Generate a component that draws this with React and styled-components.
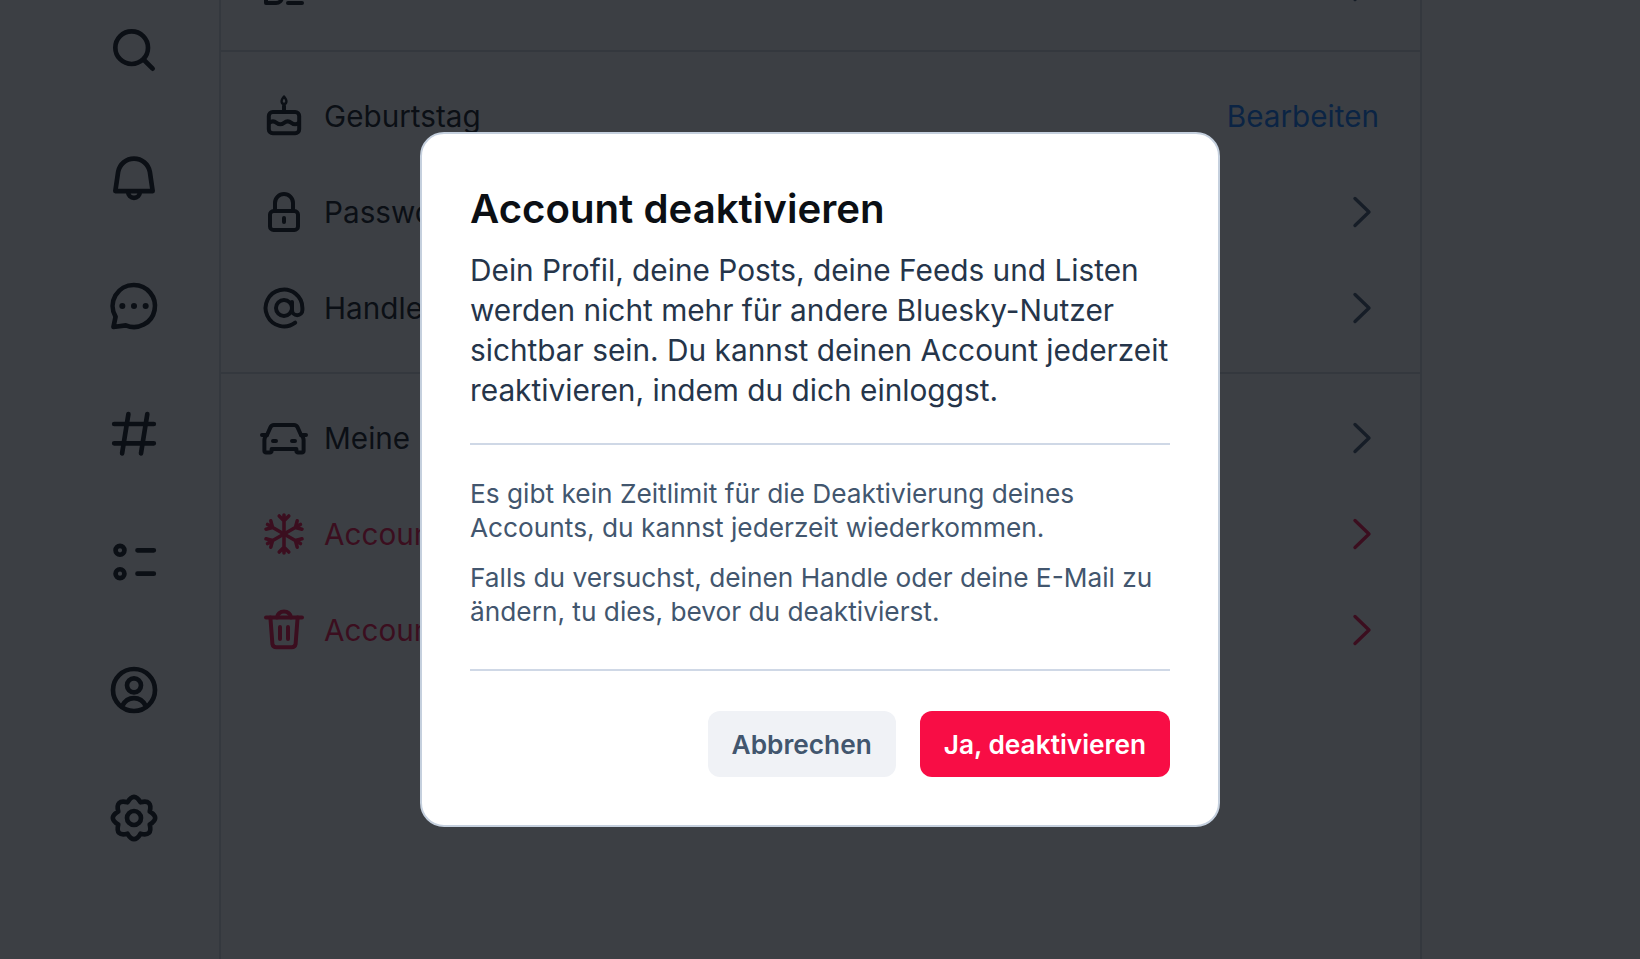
import styled, { createGlobalStyle } from "styled-components";

const GlobalStyle = createGlobalStyle`
  html, body {
    margin: 0;
    height: 100%;
    background: #fff;
    overflow: hidden;
    font-family: Inter, "Noto Sans", sans-serif;
    color: #0b0f14;
  }
`;

const Page = styled.div`
  display: grid;
  grid-template-columns: 219px 1203px 1fr;
  height: 959px;
  overflow: hidden;
`;

const Nav = styled.nav`
  display: flex;
  flex-direction: column;
  align-items: center;
  gap: 72px;
  padding: 22px 0 0 49px;
`;

const Main = styled.main`
  border-left: 2px solid #d4dbe2;
  border-right: 2px solid #d4dbe2;
`;

const Group = styled.section`
  display: flex;
  flex-direction: column;
  padding: 16px 0;
  border-bottom: ${(p) => (p.$last ? "none" : "2px solid #d4dbe2")};
  margin-top: ${(p) => (p.$scrolled ? "-78px" : "0")};
`;

const Row = styled.div`
  display: flex;
  align-items: center;
  gap: 16px;
  height: 96px;
  padding: 0 41px 0 39px;
  color: ${(p) => (p.$danger ? "#f80d45" : "#0b0f14")};
`;

const Label = styled.span`
  flex: 1;
  font-size: 29.7px;
  white-space: nowrap;
`;

const EditLink = styled.span`
  font-size: 29.7px;
  color: #0a7aff;
`;

const Chevron = styled.svg`
  width: 32px;
  height: 32px;
  fill: none;
  stroke: ${(p) => (p.$danger ? "#f80d45" : "#42566e")};
  stroke-width: 3.4;
  stroke-linecap: round;
  stroke-linejoin: round;
`;

const Icon = styled.svg`
  flex: none;
  width: ${(p) => p.$size}px;
  height: ${(p) => p.$size}px;
  fill: none;
  stroke: currentColor;
  stroke-width: 2;
  stroke-linecap: round;
  stroke-linejoin: round;
`;

const Overlay = styled.div`
  position: fixed;
  inset: 0;
  display: flex;
  align-items: center;
  justify-content: center;
  background: rgba(11, 15, 21, 0.8);
`;

const Dialog = styled.div`
  width: 700px;
  padding: 48px;
  background: #fff;
  border: 2px solid #c5d0de;
  border-radius: 24px;
`;

const Title = styled.h2`
  margin: 0 0 15px;
  font-size: 40.2px;
  line-height: 53px;
  font-weight: 600;
  color: #0b0f14;
`;

const Lead = styled.p`
  margin: 0;
  padding-bottom: 1px;
  font-size: 29.8px;
  line-height: 40px;
  color: #25354a;
`;

const Divider = styled.hr`
  height: 2px;
  margin: 32px 0;
  border: 0;
  background: #cfd8e6;
`;

const Notes = styled.div`
  display: flex;
  flex-direction: column;
  gap: 16px;
  padding-bottom: 8px;
`;

const Note = styled.p`
  margin: 0;
  font-size: 26.25px;
  line-height: 34px;
  color: #42566e;
`;

const Actions = styled.div`
  display: flex;
  justify-content: flex-end;
  gap: 24px;
  margin-top: 40px;
`;

const Button = styled.button`
  height: 66px;
  padding: 0 24px;
  border: 0;
  border-radius: 12px;
  font-family: inherit;
  font-size: 26.25px;
  font-weight: 600;
  background: ${(p) => (p.$primary ? "#f80d45" : "#f0f2f6")};
  color: ${(p) => (p.$primary ? "#fff" : "#42566e")};
`;

const Dot = styled.circle`
  fill: currentColor;
  stroke: none;
`;

const cogPath = () => {
  const pt = (deg, r) => {
    const a = (deg * Math.PI) / 180;
    return `${(12 + r * Math.cos(a)).toFixed(2)} ${(12 + r * Math.sin(a)).toFixed(2)}`;
  };
  let d = `M${pt(-112.5, 7.3)}`;
  for (let i = 0; i < 8; i++) {
    const tip = -90 + i * 45;
    d += ` Q${pt(tip, 11.4)} ${pt(tip + 22.5, 7.3)}`;
  }
  return d + "Z";
};

const navIcons = [
  <>
    <circle cx="11" cy="11" r="7" />
    <path d="M16.5 16.5 20 20" />
  </>,
  <>
    <path d="M4 17.6 5.2 9.4a6.9 6.9 0 0 1 13.6 0L20 17.6Z" />
    <path d="M9.5 18a2.5 2.5 0 0 0 5 0" />
  </>,
  <>
    <path d="M12 3a9 9 0 1 1-3.5 17.3L3.2 21l.9-4.4A9 9 0 0 1 12 3Z" />
    <Dot cx="7" cy="12" r="1.3" />
    <Dot cx="12" cy="12" r="1.3" />
    <Dot cx="17" cy="12" r="1.3" />
  </>,
  <path d="M9.6 3.5 6.9 20.3M17.7 3.5 15 20.3M3.5 7.7h17M3.5 16h17" />,
  <>
    <circle cx="6" cy="7" r="1.9" />
    <circle cx="6" cy="17" r="1.9" />
    <path d="M13.5 7h7M13.5 17h7" />
  </>,
  <>
    <circle cx="12" cy="12" r="9" />
    <circle cx="12" cy="10" r="3" />
    <path d="M6.8 19C8 16.7 9.8 15.5 12 15.5s4 1.2 5.2 3.5" />
  </>,
  <>
    <path d={cogPath()} />
    <circle cx="12" cy="12" r="3" />
  </>,
];

const ListIcon = (
  <>
    <path d="M3 13h5a3 3 0 0 1 3 3v1.5a3 3 0 0 1-3 3H3Z" />
    <path d="M14 20.5h7" />
  </>
);

const CakeIcon = (
  <>
    <rect x="4.4" y="10" width="15.2" height="10.6" rx="2" />
    <path d="M4.6 15.4q1.85-1.4 3.7 0t3.7 0 3.7 0 3.7 0" />
    <path d="M12 7v3" />
    <path d="M12 2.2c.8 1 1.3 1.7 1.2 2.5a1.2 1.2 0 0 1-2.4 0c-.1-.8.4-1.5 1.2-2.5Z" strokeWidth="1.2" />
  </>
);

const LockIcon = (
  <>
    <rect x="5" y="11.5" width="14" height="9.5" rx="1.8" />
    <path d="M7.5 11.5V7.5a4.5 4.5 0 0 1 9 0v4" />
    <path d="M12 15v2" />
  </>
);

const AtIcon = (
  <>
    <circle cx="12" cy="12" r="4" />
    <path d="M16 9v4a2.6 2.6 0 0 0 5.2 0v-1a9.2 9.2 0 1 0-3.6 7.3" />
  </>
);

const CarIcon = (
  <>
    <path d="M7 5.5h10a2 2 0 0 1 1.8 1.2l1.7 3.8q1.3 1 1.3 2.5v5.5a.8.8 0 0 1-.8.8h-2a.8.8 0 0 1-.8-.8v-1H5.8v1a.8.8 0 0 1-.8.8H3a.8.8 0 0 1-.8-.8V13q0-1.5 1.3-2.5l1.7-3.8A2 2 0 0 1 7 5.5Z" />
    <path d="M1 10.5h2.5M20.5 10.5H23M6.5 13.5h1.5M16 13.5h1.5" />
  </>
);

const SnowflakeIcon = (
  <>
    {[0, 60, 120].map((deg) => (
      <path
        key={deg}
        transform={`rotate(${deg} 12 12)`}
        d="M12 2.5v19M9.6 3 12 5.4 14.4 3M9.6 21 12 18.6 14.4 21"
        strokeWidth="1.8"
      />
    ))}
  </>
);

const TrashIcon = (
  <>
    <path d="M3 5.8h18" />
    <path d="M8.5 5.8a3.5 3 0 0 1 7 0" />
    <path d="M5.2 5.8l1 13.2a2 2 0 0 0 2 1.6h7.6a2 2 0 0 0 2-1.6l1-13.2" />
    <path d="M10 10.5v6M14 10.5v6" />
  </>
);

const Arrow = ({ danger }) => (
  <Chevron viewBox="0 0 32 32" $danger={danger}>
    <path d="M8 2.5 22 16 8 29.5" />
  </Chevron>
);

const SettingRow = ({ icon, label, danger, edit }) => (
  <Row $danger={danger}>
    <Icon viewBox="0 0 24 24" $size={48}>
      {icon}
    </Icon>
    <Label>{label}</Label>
    {edit ? <EditLink>Bearbeiten</EditLink> : <Arrow danger={danger} />}
  </Row>
);

export default function App() {
  return (
    <>
      <GlobalStyle />
      <Page>
        <Nav>
          {navIcons.map((icon, i) => (
            <Icon key={i} viewBox="0 0 24 24" $size={56}>
              {icon}
            </Icon>
          ))}
        </Nav>
        <Main>
          <Group $scrolled>
            <SettingRow icon={ListIcon} label="" />
          </Group>
          <Group>
            <SettingRow icon={CakeIcon} label="Geburtstag" edit />
            <SettingRow icon={LockIcon} label="Passwort" />
            <SettingRow icon={AtIcon} label="Handle" />
          </Group>
          <Group $last>
            <SettingRow icon={CarIcon} label="Meine Daten exportieren" />
            <SettingRow icon={SnowflakeIcon} label="Account deaktivieren" danger />
            <SettingRow icon={TrashIcon} label="Account löschen" danger />
          </Group>
        </Main>
      </Page>
      <Overlay>
        <Dialog>
          <Title>Account deaktivieren</Title>
          <Lead>
            Dein Profil, deine Posts, deine Feeds und Listen werden nicht mehr für andere
            Bluesky-Nutzer sichtbar sein. Du kannst deinen Account jederzeit reaktivieren,
            indem du dich einloggst.
          </Lead>
          <Divider />
          <Notes>
            <Note>
              Es gibt kein Zeitlimit für die Deaktivierung deines Accounts, du kannst jederzeit
              wiederkommen.
            </Note>
            <Note>
              Falls du versuchst, deinen Handle oder deine E-Mail zu ändern, tu dies, bevor du
              deaktivierst.
            </Note>
          </Notes>
          <Divider />
          <Actions>
            <Button>Abbrechen</Button>
            <Button $primary>Ja, deaktivieren</Button>
          </Actions>
        </Dialog>
      </Overlay>
    </>
  );
}
